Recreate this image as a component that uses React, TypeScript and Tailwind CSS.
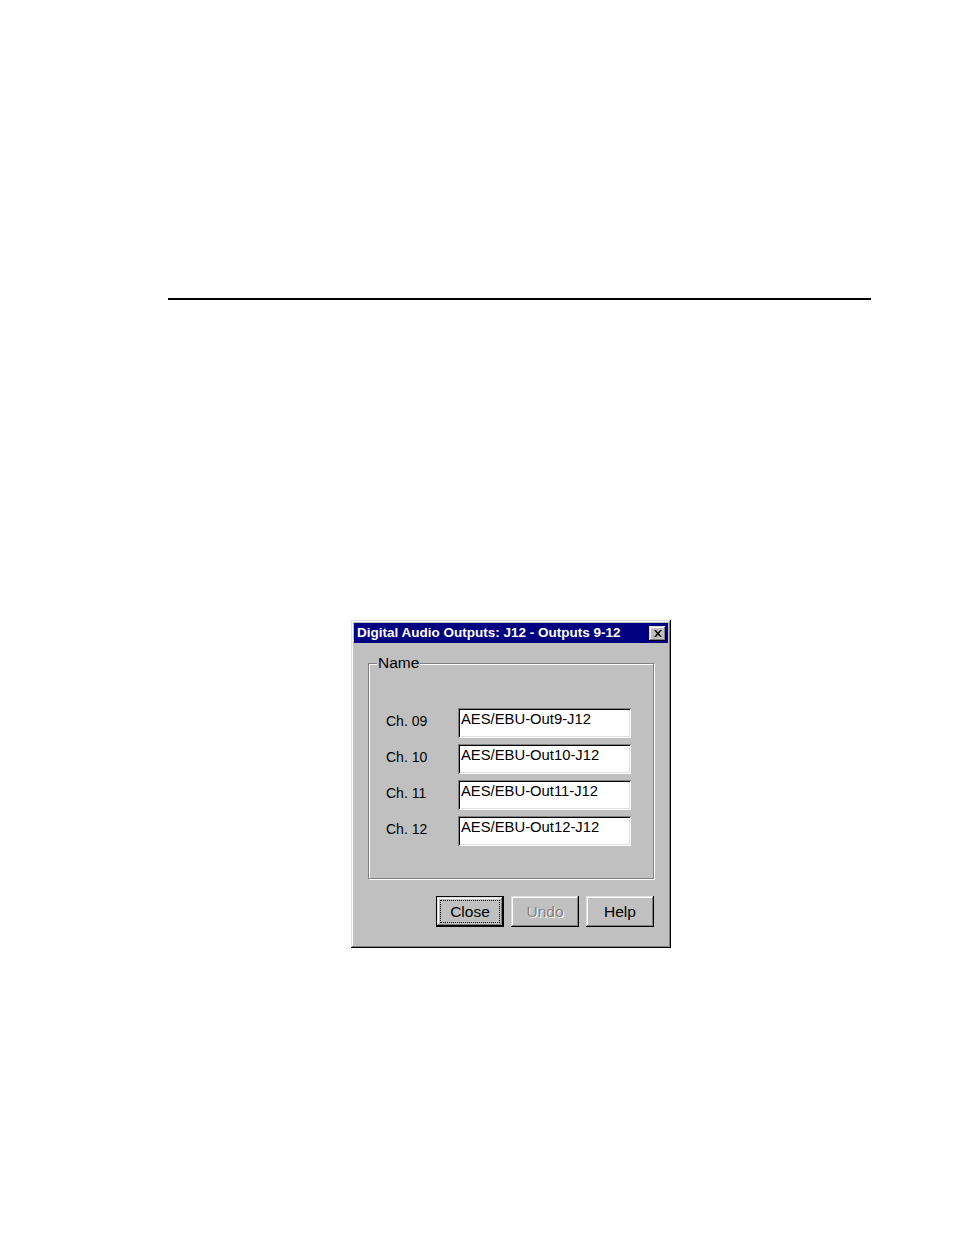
import React from 'react'

const font = { fontFamily: '"Liberation Sans", Arial, sans-serif' }

const raised =
  'shadow-[inset_-1px_-1px_0_#000,inset_1px_1px_0_#dfdfdf,inset_-2px_-2px_0_#808080,inset_2px_2px_0_#fff]'

const channels = [
  { label: 'Ch. 09', value: 'AES/EBU-Out9-J12' },
  { label: 'Ch. 10', value: 'AES/EBU-Out10-J12' },
  { label: 'Ch. 11', value: 'AES/EBU-Out11-J12' },
  { label: 'Ch. 12', value: 'AES/EBU-Out12-J12' },
]

function TextBox({ value }: { value: string }) {
  return (
    <div className="w-[173px] h-[30px] bg-white shadow-[inset_1px_1px_0_#808080,inset_-1px_-1px_0_#fff,inset_2px_2px_0_#000,inset_-2px_-2px_0_#dfdfdf] pl-[3px] pt-[3px] text-[14.8px] leading-[16px] text-black whitespace-nowrap">
      {value}
    </div>
  )
}

function Button({ label, isDefault, disabled }: { label: string; isDefault?: boolean; disabled?: boolean }) {
  if (isDefault) {
    return (
      <button className="w-[68px] h-[31px] border border-black bg-[#c0c0c0] p-0">
        <div className={`w-full h-full ${raised} p-[3px]`}>
          <div className="w-full h-full border border-dotted border-black flex items-center justify-center text-[15.5px] text-black">
            {label}
          </div>
        </div>
      </button>
    )
  }
  return (
    <button
      className={`w-[68px] h-[31px] bg-[#c0c0c0] ${raised} flex items-center justify-center text-[15.5px] ${
        disabled ? 'text-[#808080] [text-shadow:1px_1px_0_#fff]' : 'text-black'
      }`}
    >
      {label}
    </button>
  )
}

export default function App() {
  return (
    <div className="w-[954px] h-[1235px] bg-white overflow-hidden" style={font}>
      <div className="h-[298px]" />
      <div className="ml-[168px] w-[703px] h-[2px] bg-black" />
      <div className="h-[320px]" />

      <div className={`ml-[351px] w-[320px] h-[328px] bg-[#c0c0c0] ${raised} p-[3px]`}>
        <div className="h-[20px] bg-[#000080] flex items-center justify-between pl-[3px] pr-[2px]">
          <span className="text-white font-bold text-[13.5px] leading-none">
            Digital Audio Outputs: J12 - Outputs 9-12
          </span>
          <div className={`w-[17px] h-[15px] bg-[#c0c0c0] ${raised} flex items-center justify-center`}>
            <svg width="8" height="7" viewBox="0 0 8 7">
              <path d="M0 0h2l2 2.5L6 0h2L5 3.5 8 7H6L4 4.5 2 7H0l3-3.5z" fill="#000" />
            </svg>
          </div>
        </div>

        <div className="px-[14px] pt-[20px]">
          <div className="relative h-[216px] border border-[#808080] shadow-[inset_1px_1px_0_#fff,1px_1px_0_#fff] pt-[44px] pl-[17px]">
            <span className="absolute left-[8px] top-[-10px] bg-[#c0c0c0] px-[1px] text-[15.5px] leading-[17px] text-black">
              Name
            </span>
            <div className="flex flex-col gap-[6px]">
              {channels.map(ch => (
                <div key={ch.label} className="flex items-start">
                  <div className="w-[72px] pt-[5px] text-[14px] leading-[16px] text-black">{ch.label}</div>
                  <TextBox value={ch.value} />
                </div>
              ))}
            </div>
          </div>

          <div className="flex justify-end gap-[7px] mt-[17px]">
            <Button label="Close" isDefault />
            <Button label="Undo" disabled />
            <Button label="Help" />
          </div>
        </div>
      </div>
    </div>
  )
}
